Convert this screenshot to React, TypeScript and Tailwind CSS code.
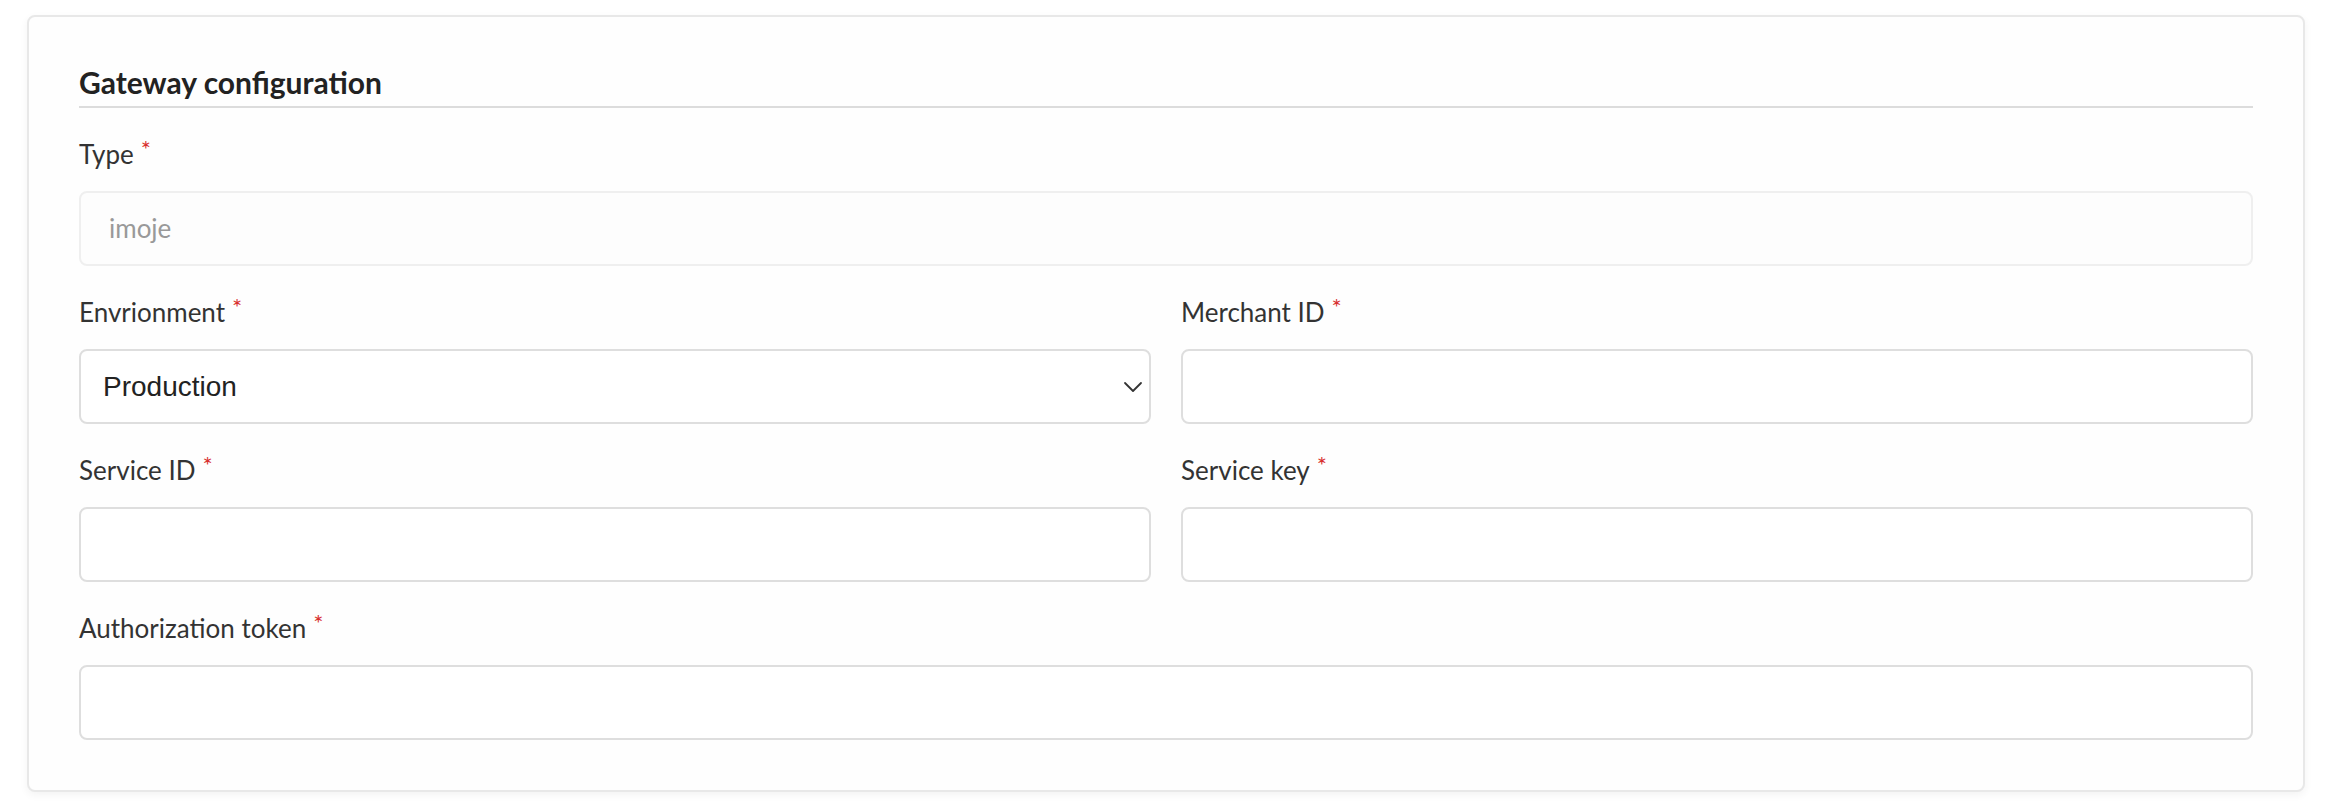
import React from "react";

const lato = { fontFamily: "Lato, 'Noto Sans', sans-serif" };

function Label({ text }: { text: string }) {
  return (
    <div className="flex items-start h-[31px] text-[26px] leading-[1.2] text-[#333]" style={lato}>
      <span>{text}</span>
      <span className="ml-[7px] mt-[-2px] text-[24px] leading-none text-[#d8302f]">*</span>
    </div>
  );
}

function TextField({ label }: { label: string }) {
  return (
    <div className="flex flex-col gap-[21px]">
      <Label text={label} />
      <div className="h-[75px] rounded-[8px] border-2 border-[#dedede] bg-white" />
    </div>
  );
}

export default function App() {
  return (
    <div className="min-h-[810px] bg-white pt-[15px] px-[27px]">
      <div className="rounded-[8px] border-2 border-[#e8e8e8] bg-[#fefefe] px-[50px] pt-[47px] pb-[50px] shadow-[0_3px_8px_rgba(0,0,0,0.05)]">
        <h2
          className="text-[30px] font-bold leading-[1.2] text-[#222] pb-[6px] border-b-2 border-[#dcdcdc]"
          style={lato}
        >
          Gateway configuration
        </h2>
        <div className="mt-[31px] flex flex-col gap-[31px]">
          <div className="flex flex-col gap-[21px]">
            <Label text="Type" />
            <div
              className="h-[75px] rounded-[8px] border-2 border-[#efefef] bg-[#fdfdfd] flex items-center pl-[28px] text-[26px] text-[#999999]"
              style={lato}
            >
              imoje
            </div>
          </div>
          <div className="grid grid-cols-2 gap-x-[30px] gap-y-[31px]">
            <div className="flex flex-col gap-[21px]">
              <Label text="Envrionment" />
              <div className="h-[75px] rounded-[8px] border-2 border-[#dedede] bg-white flex items-center justify-between pl-[22px] pr-[6px]">
                <span
                  className="text-[28px] text-[#222]"
                  style={{ fontFamily: "'Liberation Sans', Arial, sans-serif" }}
                >
                  Production
                </span>
                <svg width="20" height="12" viewBox="0 0 20 12" fill="none">
                  <path d="M2 2 L10 10 L18 2" stroke="#333" strokeWidth="1.8" strokeLinecap="round" strokeLinejoin="round" />
                </svg>
              </div>
            </div>
            <TextField label="Merchant ID" />
            <TextField label="Service ID" />
            <TextField label="Service key" />
          </div>
          <TextField label="Authorization token" />
        </div>
      </div>
    </div>
  );
}
